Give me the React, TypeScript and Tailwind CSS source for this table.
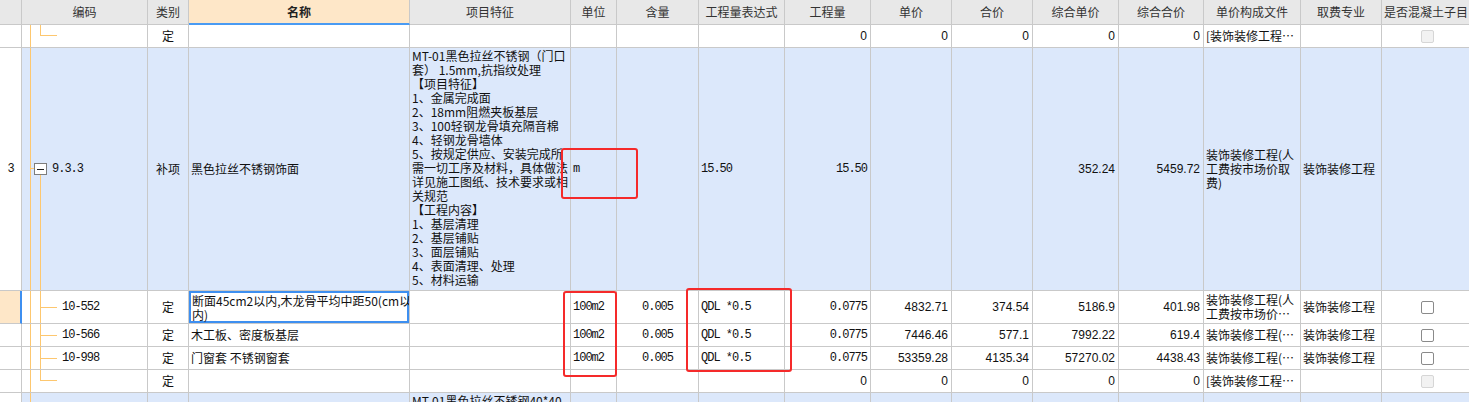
import React from "react";

const ROW =
  "grid grid-cols-[22px_126px_41px_221px_161px_46px_82px_86px_86px_81px_81px_86px_85px_97px_81px_100px]";
const B = "border-r border-b border-[#c9c9c9]";
const CJK = "font-['Noto_Sans_CJK_SC',sans-serif] text-[12px] leading-[14px] text-[#111]";
const MONO =
  "font-['Liberation_Mono','Noto_Sans_CJK_SC',monospace] text-[12px] tracking-[-1px] leading-[14px] text-[#111]";
const NUM = "font-['Liberation_Sans','Noto_Sans_CJK_SC',sans-serif] text-[12px] leading-[14px] text-[#111]";
const TL = "absolute bg-[#fdc76f]";

function Cell({
  className = "",
  children,
}: {
  className?: string;
  children?: React.ReactNode;
}) {
  return (
    <div className={`${B} relative flex items-center overflow-hidden whitespace-nowrap ${className}`}>
      {children}
    </div>
  );
}

function Check({ disabled }: { disabled?: boolean }) {
  return disabled ? (
    <span className="block w-[13px] h-[13px] rounded-[2px] border border-[#d6d6d6] bg-[#f2f2f2]" />
  ) : (
    <span className="block w-[13px] h-[13px] rounded-[2px] border border-[#8a8a8a] bg-white" />
  );
}

const headers = [
  "",
  "编码",
  "类别",
  "名称",
  "项目特征",
  "单位",
  "含量",
  "工程量表达式",
  "工程量",
  "单价",
  "合价",
  "综合单价",
  "综合合价",
  "单价构成文件",
  "取费专业",
  "是否混凝土子目",
];

const featureLines = [
  "MT-01黑色拉丝不锈钢（门口",
  "套） 1.5mm,抗指纹处理",
  "【项目特征】",
  "1、金属完成面",
  "2、18mm阻燃夹板基层",
  "3、100轻钢龙骨填充隔音棉",
  "4、轻钢龙骨墙体",
  "5、按规定供应、安装完成所",
  "需一切工序及材料，具体做法",
  "详见施工图纸、技术要求或相",
  "关规范",
  "【工程内容】",
  "1、基层清理",
  "2、基层铺贴",
  "3、面层铺贴",
  "4、表面清理、处理",
  "5、材料运输",
];

type Sub = {
  code: string;
  name: React.ReactNode;
  qty: string;
  price: string;
  total: string;
  uprice: string;
  utotal: string;
  file: React.ReactNode;
  h: string;
  selected?: boolean;
};

const subs: Sub[] = [
  {
    code: "10-552",
    name: (
      <>
        断面45cm2以内,木龙骨平均中距50(cm以
        <br />
        内)
      </>
    ),
    qty: "0.0775",
    price: "4832.71",
    total: "374.54",
    uprice: "5186.9",
    utotal: "401.98",
    file: (
      <>
        装饰装修工程(人
        <br />
        工费按市场价…
      </>
    ),
    h: "h-[33px]",
    selected: true,
  },
  {
    code: "10-566",
    name: "木工板、密度板基层",
    qty: "0.0775",
    price: "7446.46",
    total: "577.1",
    uprice: "7992.22",
    utotal: "619.4",
    file: "装饰装修工程(…",
    h: "h-[23px]",
  },
  {
    code: "10-998",
    name: "门窗套 不锈钢窗套",
    qty: "0.0775",
    price: "53359.28",
    total: "4135.34",
    uprice: "57270.02",
    utotal: "4438.43",
    file: "装饰装修工程(…",
    h: "h-[23px]",
  },
];

function EmptyDingRow() {
  return (
    <div className={`${ROW} h-[23px]`}>
      <Cell className="bg-white" />
      <Cell className="bg-white">
        <span className={`${TL} left-[8px] top-0 bottom-0 w-px`} />
        <span className={`${TL} left-[18px] top-0 h-[11px] w-px`} />
        <span className={`${TL} left-[18px] top-[10px] h-px w-[17px]`} />
      </Cell>
      <Cell className={`${CJK} justify-center`}>定</Cell>
      <Cell />
      <Cell />
      <Cell />
      <Cell />
      <Cell />
      <Cell className={`${NUM} justify-end pr-[3px]`}>0</Cell>
      <Cell className={`${NUM} justify-end pr-[3px]`}>0</Cell>
      <Cell className={`${NUM} justify-end pr-[3px]`}>0</Cell>
      <Cell className={`${NUM} justify-end pr-[3px]`}>0</Cell>
      <Cell className={`${NUM} justify-end pr-[3px]`}>0</Cell>
      <Cell className={`${CJK} pl-[2px]`}>[装饰装修工程…</Cell>
      <Cell />
      <Cell className="justify-center pr-[8px]">
        <Check disabled />
      </Cell>
    </div>
  );
}

export default function App() {
  return (
    <div className="relative w-[1469px] h-[402px] overflow-hidden bg-white">
      {/* header */}
      <div className={`${ROW} h-[25px]`}>
        {headers.map((t, i) =>
          i === 3 ? (
            <div
              key={i}
              className="border-r border-[#c9c9c9] border-b-2 border-b-[#4a9bf3] bg-[#fee7c8] flex items-center justify-center font-['Noto_Sans_CJK_SC',sans-serif] text-[12px] font-bold text-[#222]"
            >
              {t}
            </div>
          ) : (
            <div
              key={i}
              className={`${B} bg-[#e8e8e8] flex items-center overflow-hidden whitespace-nowrap font-['Noto_Sans_CJK_SC',sans-serif] text-[12px] text-[#333] ${
                i === 15 ? "justify-start pl-[2px]" : "justify-center"
              }`}
            >
              {t}
            </div>
          )
        )}
      </div>

      {/* row: empty 定 */}
      <EmptyDingRow />

      {/* row 3 : 9.3.3 */}
      <div className={`${ROW} h-[243px] bg-[#dce8fb]`}>
        <Cell className={`${MONO} bg-white justify-center`}>3</Cell>
        <Cell className={`${MONO} pl-[30px]`}>
          <span className={`${TL} left-[8px] top-0 bottom-0 w-px`} />
          <span className={`${TL} left-[8px] top-[120px] h-px w-[4px]`} />
          <span className={`${TL} left-[18px] top-[127px] bottom-0 w-px`} />
          <span className="absolute left-[12px] top-[115px] w-[13px] h-[12px] border border-[#7d7d7d] bg-white flex items-center justify-center">
            <span className="block w-[7px] h-px bg-[#222]" />
          </span>
          9.3.3
        </Cell>
        <Cell className={`${CJK} justify-center`}>补项</Cell>
        <Cell className={`${CJK} pl-[2px]`}>黑色拉丝不锈钢饰面</Cell>
        <Cell className={`${CJK} items-start pl-[2px] pt-[1px]`}>
          <div className="flex flex-col">
            {featureLines.map((l, i) => (
              <span key={i}>{l}</span>
            ))}
          </div>
        </Cell>
        <Cell className={`${MONO} pl-[2px]`}>m</Cell>
        <Cell />
        <Cell className={`${MONO} pl-[2px]`}>15.50</Cell>
        <Cell className={`${MONO} justify-end pr-[3px]`}>15.50</Cell>
        <Cell />
        <Cell />
        <Cell className={`${NUM} justify-end pr-[3px]`}>352.24</Cell>
        <Cell className={`${NUM} justify-end pr-[3px]`}>5459.72</Cell>
        <Cell className={`${CJK} pl-[2px] leading-[13px] whitespace-normal`}>
          <div>
            装饰装修工程(人
            <br />
            工费按市场价取
            <br />
            费)
          </div>
        </Cell>
        <Cell className={`${CJK} pl-[2px]`}>装饰装修工程</Cell>
        <Cell />
      </div>

      {/* sub rows */}
      {subs.map((s) => (
        <div key={s.code} className={`${ROW} ${s.h} bg-white`}>
          {s.selected ? (
            <div className="border-b border-[#c9c9c9] border-r-2 border-r-[#3d8ff0] bg-[#fee7c8]" />
          ) : (
            <Cell />
          )}
          <Cell className={`${MONO} pl-[40px]`}>
            <span className={`${TL} left-[8px] top-0 bottom-0 w-px`} />
            <span className={`${TL} left-[18px] top-0 bottom-0 w-px`} />
            <span className={`${TL} left-[18px] top-1/2 h-px w-[17px]`} />
            {s.code}
          </Cell>
          <Cell className={`${CJK} justify-center`}>定</Cell>
          {s.selected ? (
            <div className={`${B} relative overflow-hidden`}>
              <div className={`${CJK} absolute inset-0 border-2 border-[#3d8ff0] pl-[1px] pt-[1px] whitespace-nowrap`}>
                {s.name}
              </div>
            </div>
          ) : (
            <Cell className={`${CJK} pl-[2px]`}>{s.name}</Cell>
          )}
          <Cell />
          <Cell className={`${MONO} pl-[2px]`}>100m2</Cell>
          <Cell className={`${MONO} justify-center`}>0.005</Cell>
          <Cell className={`${MONO} pl-[2px]`}>QDL *0.5</Cell>
          <Cell className={`${MONO} justify-end pr-[3px]`}>{s.qty}</Cell>
          <Cell className={`${NUM} justify-end pr-[3px]`}>{s.price}</Cell>
          <Cell className={`${NUM} justify-end pr-[3px]`}>{s.total}</Cell>
          <Cell className={`${NUM} justify-end pr-[3px]`}>{s.uprice}</Cell>
          <Cell className={`${NUM} justify-end pr-[3px]`}>{s.utotal}</Cell>
          <Cell className={`${CJK} pl-[2px] leading-[13px]`}>
            <div>{s.file}</div>
          </Cell>
          <Cell className={`${CJK} pl-[2px]`}>装饰装修工程</Cell>
          <Cell className="justify-center pr-[8px]">
            <Check />
          </Cell>
        </div>
      ))}

      {/* empty 定 row at end of group */}
      <EmptyDingRow />

      {/* next item row (partially visible) */}
      <div className={`${ROW} h-[60px] bg-[#dce8fb]`}>
        <Cell className="bg-white" />
        <Cell>
          <span className={`${TL} left-[8px] top-0 bottom-0 w-px`} />
        </Cell>
        <Cell />
        <Cell />
        <Cell className={`${CJK} items-start pl-[2px] pt-[1px]`}>MT-01黑色拉丝不锈钢40*40</Cell>
        <Cell />
        <Cell />
        <Cell />
        <Cell />
        <Cell />
        <Cell />
        <Cell />
        <Cell />
        <Cell />
        <Cell />
        <Cell />
      </div>

      {/* red annotation boxes */}
      <div className="absolute left-[561px] top-[148px] w-[77px] h-[51px] border-2 border-[#f52a2a] rounded-[3px]" />
      <div className="absolute left-[563px] top-[291px] w-[54px] h-[86px] border-2 border-[#f52a2a] rounded-[3px]" />
      <div className="absolute left-[686px] top-[288px] w-[106px] h-[84px] border-2 border-[#f52a2a] rounded-[3px]" />
    </div>
  );
}
